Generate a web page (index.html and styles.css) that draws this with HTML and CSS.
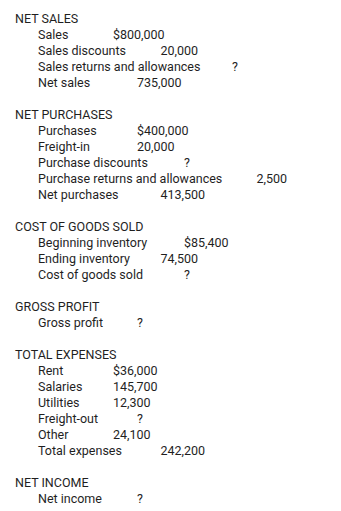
FILE: index.html
```html
<!DOCTYPE html>
<html>
<head>
<meta charset="utf-8">
<link rel="stylesheet" href="styles.css">
</head>
<body>
<div class="sheet">
  <section class="sec">
    <div class="head">NET SALES</div>
    <div class="row"><span class="lab c113">Sales</span><span>$800,000</span></div>
    <div class="row"><span class="lab c160">Sales discounts</span><span>20,000</span></div>
    <div class="row"><span class="lab c232">Sales returns and allowances</span><span>?</span></div>
    <div class="row"><span class="lab c137">Net sales</span><span>735,000</span></div>
  </section>
  <section class="sec">
    <div class="head">NET PURCHASES</div>
    <div class="row"><span class="lab c137">Purchases</span><span>$400,000</span></div>
    <div class="row"><span class="lab c137">Freight-in</span><span>20,000</span></div>
    <div class="row"><span class="lab c184">Purchase discounts</span><span>?</span></div>
    <div class="row"><span class="lab c256">Purchase returns and allowances</span><span>2,500</span></div>
    <div class="row"><span class="lab c160">Net purchases</span><span>413,500</span></div>
  </section>
  <section class="sec">
    <div class="head">COST OF GOODS SOLD</div>
    <div class="row"><span class="lab c184">Beginning inventory</span><span>$85,400</span></div>
    <div class="row"><span class="lab c160">Ending inventory</span><span>74,500</span></div>
    <div class="row"><span class="lab c184">Cost of goods sold</span><span>?</span></div>
  </section>
  <section class="sec">
    <div class="head">GROSS PROFIT</div>
    <div class="row"><span class="lab c137">Gross profit</span><span>?</span></div>
  </section>
  <section class="sec">
    <div class="head">TOTAL EXPENSES</div>
    <div class="row"><span class="lab c113">Rent</span><span>$36,000</span></div>
    <div class="row"><span class="lab c113">Salaries</span><span>145,700</span></div>
    <div class="row"><span class="lab c113">Utilities</span><span>12,300</span></div>
    <div class="row"><span class="lab c137">Freight-out</span><span>?</span></div>
    <div class="row"><span class="lab c113">Other</span><span>24,100</span></div>
    <div class="row"><span class="lab c160">Total expenses</span><span>242,200</span></div>
  </section>
  <section class="sec">
    <div class="head">NET INCOME</div>
    <div class="row"><span class="lab c137">Net income</span><span>?</span></div>
  </section>
</div>
</body>
</html>
```
FILE: styles.css
```css
html, body {
  margin: 0;
  padding: 0;
  background: #ffffff;
}
.sheet {
  padding: 11px 15px 0 15px;
  font-family: Roboto, "Liberation Sans", sans-serif;
  font-size: 12.5px;
  line-height: 16px;
  color: #1f1f1f;
  display: flex;
  flex-direction: column;
  gap: 16px;
}
.row {
  padding-left: 23px;
  white-space: nowrap;
  display: flex;
}
.lab {
  display: inline-block;
  flex: none;
}
.c113 { width: 75px; }
.c137 { width: 99px; }
.c160 { width: 122.5px; }
.c184 { width: 146px; }
.c232 { width: 194px; }
.c256 { width: 218.5px; }
```
